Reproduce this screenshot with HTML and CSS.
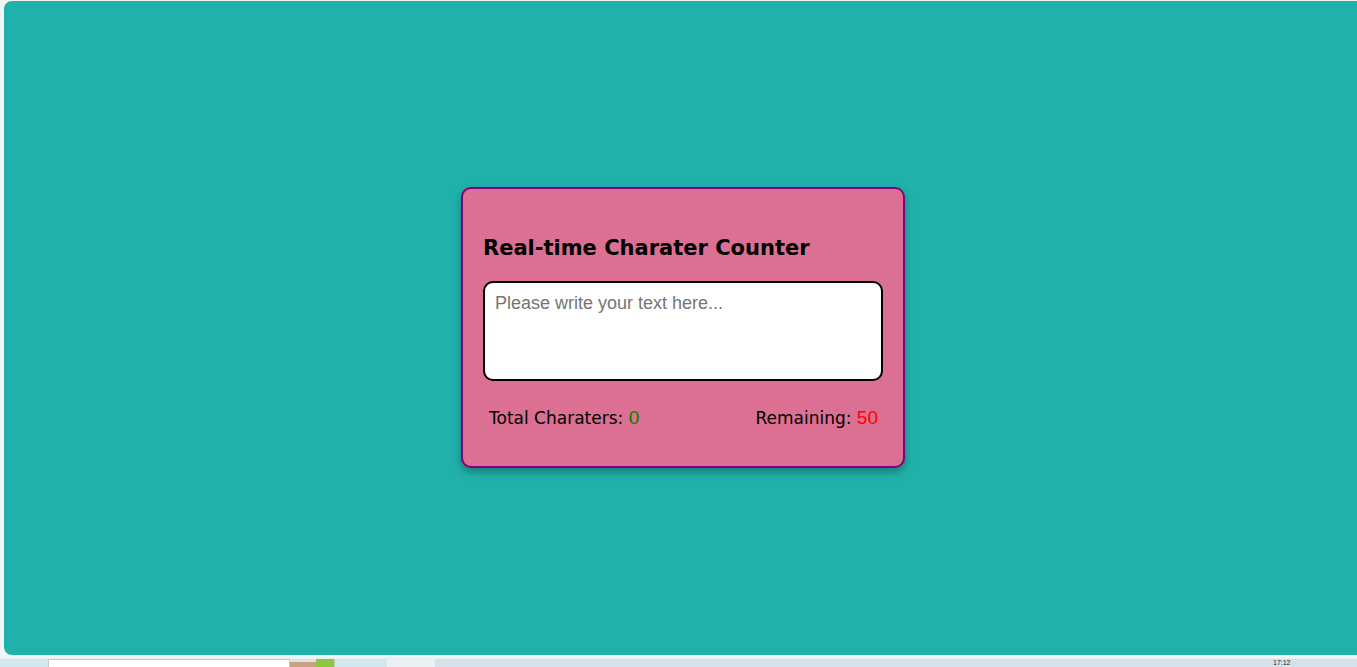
FILE: index.html
```html
<!DOCTYPE html>
<html lang="en">
<head>
<meta charset="utf-8">
<title>Real-time Character Counter</title>
<link rel="stylesheet" href="styles.css">
</head>
<body>
<div class="screen">
  <main class="window">
    <section class="card">
      <h2 class="title">Real-time Charater Counter</h2>
      <textarea class="input" placeholder="Please write your text here..."></textarea>
      <div class="stats">
        <p class="stat">Total Charaters: <span class="total">0</span></p>
        <p class="stat">Remaining: <span class="remain">50</span></p>
      </div>
    </section>
  </main>
  <footer class="taskbar">
    <div class="tb-search"></div>
    <div class="tb-icon tb-icon-a"></div>
    <div class="tb-icon tb-icon-b"></div>
    <div class="tb-gap"></div>
    <div class="tb-btn"></div>
    <div class="tb-fill"></div>
    <div class="tb-clock">17:12</div>
  </footer>
</div>
</body>
</html>
```
FILE: styles.css
```css
* { box-sizing: border-box; }
html, body { margin: 0; padding: 0; height: 100%; }
body {
  background: #f3f4f5;
  overflow: hidden;
}
.screen {
  display: flex;
  flex-direction: column;
  height: 667px;
  padding-top: 1px;
}
.window {
  margin-left: 4px;
  height: 654px;
  background: #20b2aa;
  border-radius: 8px 0 0 8px;
  display: flex;
  align-items: center;
  justify-content: center;
  padding-left: 5px;
  padding-bottom: 2px;
}
.card {
  width: 444px;
  height: 281px;
  background: #db7093;
  border: 2px solid #800080;
  border-radius: 10px;
  box-shadow: 0 4px 8px rgba(0, 0, 0, 0.3);
  padding: 20px;
  display: flex;
  flex-direction: column;
  font-family: "Comic Sans MS", "DejaVu Sans", sans-serif;
}
.title {
  margin: 24px 0 0;
  font-size: 21px;
  line-height: 30px;
  font-weight: bold;
  color: #000;
}
.input {
  margin-top: 18px;
  width: 400px;
  height: 100px;
  border: 2px solid #000;
  border-radius: 10px;
  padding: 10px;
  font-family: "Liberation Sans", Arial, sans-serif;
  font-size: 18px;
  resize: none;
  background: #fff;
  outline: none;
}
.input::placeholder { color: #757575; }
.stats {
  margin-top: 25px;
  display: flex;
  justify-content: space-between;
  padding: 0 5px 0 6px;
}
.stat {
  margin: 0;
  font-size: 17px;
  line-height: 24px;
  color: #000;
}
.total { color: #008000; font-family: "Liberation Sans", Arial, sans-serif; font-size: 19px; }
.remain { color: #ff0000; font-family: "Liberation Sans", Arial, sans-serif; font-size: 19px; }
.taskbar {
  margin-top: 3px;
  height: 9px;
  display: flex;
  background: #d5e6ee;
  border-top: 1px solid #e4eef2;
}
.tb-search {
  margin-left: 48px;
  width: 242px;
  background: #fff;
  border: 1px solid #c8c8c8;
  border-bottom: none;
}
.tb-icon { width: 22px; }
.tb-icon-a { background: #c9a27c; width: 26px; margin-top: 3px; }
.tb-icon-b { background: #8dc63f; width: 19px; border-right: 1px solid #c8c8c8; }
.tb-gap { width: 52px; }
.tb-btn { width: 48px; background: #e9f1f5; }
.tb-fill { flex: 1; background: #d5e2ec; }
.tb-clock {
  width: 92px;
  background: #d5e2ec;
  font-family: "Liberation Sans", Arial, sans-serif;
  font-size: 7px;
  line-height: 8px;
  padding-left: 8px;
  color: #222;
  overflow: hidden;
}
```
